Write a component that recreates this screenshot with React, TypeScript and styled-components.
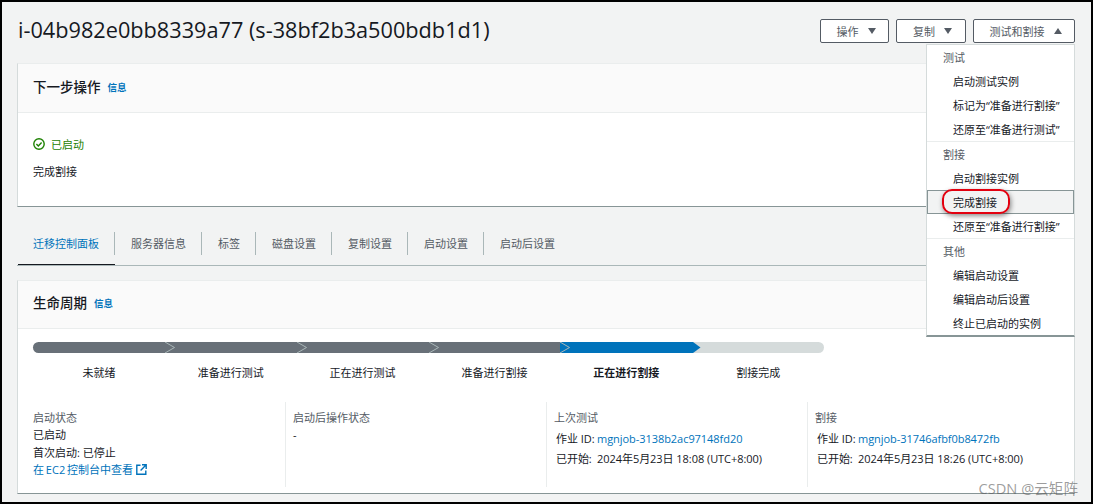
import styled, { createGlobalStyle } from 'styled-components';

const GlobalStyle = createGlobalStyle`
  html, body {
    margin: 0;
    padding: 0;
  }
  body {
    font-family: 'Open Sans', 'Noto Sans CJK SC', sans-serif;
    font-size: 11px;
    color: #16191f;
  }
`;

const Frame = styled.div`
  position: relative;
  box-sizing: border-box;
  width: 1093px;
  height: 504px;
  overflow: hidden;
  padding: 17px 16px 0 15px;
  border: 2px solid #000;
  background: #f2f3f3;
`;

const PageHeader = styled.header`
  display: flex;
  align-items: center;
  justify-content: space-between;
  height: 24px;
  margin-bottom: 20px;
`;

const Title = styled.h1`
  margin: -2px 0 0 1px;
  font-size: 21.7px;
  font-weight: 400;
  line-height: 26px;
  white-space: nowrap;
`;

const Actions = styled.div`
  display: flex;
  gap: 7px;
`;

const ActionButton = styled.button<{ $width: number }>`
  display: flex;
  align-items: center;
  justify-content: center;
  gap: 9px;
  box-sizing: border-box;
  width: ${(p) => p.$width}px;
  height: 24px;
  padding: 0 0 0 3px;
  border: 1px solid #545b64;
  border-radius: 2px;
  background: #fff;
  color: #545b64;
  font: inherit;
  font-size: 11px;
`;

const Caret = styled.svg<{ $up?: boolean }>`
  width: 8px;
  height: 6px;
  fill: #545b64;
  transform: ${(p) => (p.$up ? 'rotate(180deg)' : 'none')};
`;

const Card = styled.section<{ $height: number }>`
  box-sizing: border-box;
  height: ${(p) => p.$height}px;
  border: 1px solid #eaeded;
  border-left-color: #d5dbdb;
  border-right-color: #d5dbdb;
  border-bottom-color: #879596;
  background: #fff;
`;

const CardHeader = styled.div<{ $height: number; $lift: number }>`
  display: flex;
  align-items: center;
  gap: 7px;
  box-sizing: border-box;
  height: ${(p) => p.$height}px;
  padding: 0 15px ${(p) => p.$lift}px;
  border-bottom: 1px solid #eaeded;
  background: #fafafa;
`;

const CardTitle = styled.h2`
  margin: 0;
  font-size: 13.5px;
  font-weight: 500;
`;

const InfoLink = styled.a`
  margin-top: 2px;
  color: #0073bb;
  font-size: 9.5px;
  font-weight: 700;
`;

const NextStepBody = styled.div`
  padding: 23px 15px 0;
`;

const StatusLine = styled.div`
  display: flex;
  align-items: center;
  gap: 6px;
  height: 16px;
  margin-bottom: 12px;
  color: #1d8102;
`;

const BodyText = styled.div`
  line-height: 16px;
`;

const Tabs = styled.nav`
  display: flex;
  align-items: flex-start;
  height: 33px;
  margin: 25px 0 14px;
  border-bottom: 1px solid #aab7b8;
`;

const Tab = styled.div<{ $active?: boolean }>`
  position: relative;
  box-sizing: border-box;
  height: 23px;
  padding: 0 15px 0 16px;
  border-right: 1px solid #aab7b8;
  color: ${(p) => (p.$active ? '#0073bb' : '#545b64')};
  line-height: 23px;

  &:last-child {
    border-right: 0;
  }

  &::after {
    content: '';
    display: ${(p) => (p.$active ? 'block' : 'none')};
    position: absolute;
    left: 1px;
    right: -1px;
    top: 32px;
    height: 1px;
    background: #16191f;
  }
`;

const LifecycleBody = styled.div`
  padding: 13px 0 0;
`;

const Progress = styled.div`
  display: grid;
  grid-template-columns: repeat(6, 131.85px);
  padding-left: 15px;
`;

const Segment = styled.div<{ $tone: 'done' | 'current' | 'todo'; $first?: boolean; $last?: boolean }>`
  position: relative;
  height: 11px;
  border-radius: ${(p) => (p.$first ? '6px 0 0 6px' : p.$last ? '0 6px 6px 0' : '0')};
  background: ${(p) => (p.$tone === 'done' ? '#687078' : p.$tone === 'current' ? '#0073bb' : '#d5dbdb')};
`;

const Chevron = styled.svg`
  position: absolute;
  z-index: 1;
  top: 0;
  left: 100%;
  width: 10px;
  height: 11px;
`;

const StepLabel = styled.div<{ $current?: boolean }>`
  margin-top: 12px;
  font-weight: ${(p) => (p.$current ? 600 : 400)};
  line-height: 16px;
  text-align: center;
`;

const Details = styled.div`
  display: grid;
  grid-template-columns: 267px 261px 261px 1fr;
  height: 85px;
  margin-top: 21px;
`;

const DetailColumn = styled.div`
  box-sizing: border-box;
  padding: 7px 7px 0;
  border-left: 1px solid #eaeded;

  &:first-child {
    padding-left: 15px;
    border-left: 0;
  }
`;

const DetailLabel = styled.div`
  color: #545b64;
  line-height: 17px;
`;

const DetailLine = styled.div`
  display: flex;
  align-items: center;
  line-height: 17.5px;
  white-space: nowrap;
`;

const JobLine = styled.div`
  display: flex;
  align-items: center;
  margin: 4px 0 0 2px;
  letter-spacing: -0.05px;
  line-height: 17px;
  white-space: nowrap;

  & + & {
    margin-top: 3px;
  }
`;

const JobKey = styled.span`
  flex: none;
  width: 41px;
`;

const Link = styled.a`
  display: inline-flex;
  align-items: center;
  gap: 3px;
  color: #0073bb;
  word-spacing: -1px;
`;

const Menu = styled.div`
  position: absolute;
  z-index: 3;
  top: 42px;
  right: 16px;
  box-sizing: border-box;
  width: 149px;
  height: 293px;
  border: 1px solid #d5dbdb;
  border-bottom: 2px solid #879596;
  background: #fff;
`;

const MenuGroup = styled.div`
  border-bottom: 1px solid #eaeded;

  &:last-child {
    border-bottom: 0;
  }
`;

const MenuHeading = styled.div`
  height: 24px;
  padding-left: 16px;
  color: #545b64;
  line-height: 25px;
`;

const MenuItem = styled.div<{ $selected?: boolean }>`
  position: relative;
  box-sizing: border-box;
  height: 24px;
  padding-left: ${(p) => (p.$selected ? 25 : 26)}px;
  border: ${(p) => (p.$selected ? '1px solid #879596' : '0')};
  background: ${(p) => (p.$selected ? '#f2f3f3' : 'transparent')};
  line-height: ${(p) => (p.$selected ? 24 : 26)}px;
  white-space: nowrap;
`;

const Highlight = styled.span`
  position: absolute;
  top: -2px;
  left: 14px;
  width: 64px;
  height: 21px;
  border: 2px solid #e3000f;
  border-radius: 10px;
  box-shadow: 1px 2px 5px rgba(0, 0, 0, 0.45);
`;

const Watermark = styled.div`
  position: absolute;
  z-index: 4;
  right: 13px;
  bottom: 5px;
  color: rgba(90, 90, 90, 0.6);
  font-size: 14.6px;
  line-height: 18px;
  white-space: nowrap;
`;

const tabs = ['迁移控制面板', '服务器信息', '标签', '磁盘设置', '复制设置', '启动设置', '启动后设置'];

const steps: { label: string; tone: 'done' | 'current' | 'todo' }[] = [
  { label: '未就绪', tone: 'done' },
  { label: '准备进行测试', tone: 'done' },
  { label: '正在进行测试', tone: 'done' },
  { label: '准备进行割接', tone: 'done' },
  { label: '正在进行割接', tone: 'current' },
  { label: '割接完成', tone: 'todo' },
];

const menuGroups = [
  { heading: '测试', items: ['启动测试实例', '标记为“准备进行割接”', '还原至“准备进行测试”'] },
  { heading: '割接', items: ['启动割接实例', '完成割接', '还原至“准备进行割接”'] },
  { heading: '其他', items: ['编辑启动设置', '编辑启动后设置', '终止已启动的实例'] },
];

const jobs = [
  { title: '上次测试', id: 'mgnjob-3138b2ac97148fd20', started: '2024年5月23日 18:08 (UTC+8:00)' },
  { title: '割接', id: 'mgnjob-31746afbf0b8472fb', started: '2024年5月23日 18:26 (UTC+8:00)' },
];

function CaretIcon({ up }: { up?: boolean }) {
  return (
    <Caret $up={up} viewBox="0 0 8 6">
      <path d="M0 0h8L4 6z" />
    </Caret>
  );
}

function StatusIcon() {
  return (
    <svg width="12" height="12" viewBox="0 0 12 12" fill="none" stroke="#1d8102" strokeWidth="1.4">
      <circle cx="6" cy="6" r="5.2" />
      <path d="M3.4 6l1.9 1.9 3.3-3.5" />
    </svg>
  );
}

function ExternalIcon() {
  return (
    <svg width="11" height="11" viewBox="0 0 11 11" fill="none" stroke="#0073bb" strokeWidth="1.4">
      <path d="M4.5 1.2H.8v9h9V6.5" />
      <path d="M6 .8h4.2V5M10.2.8L4.6 6.4" />
    </svg>
  );
}

function SegmentTip({ tone }: { tone: 'done' | 'current' | 'todo' }) {
  if (tone === 'current') {
    return (
      <Chevron viewBox="0 0 10 11">
        <path d="M0 0h1l7.5 5.5L1 11H0z" fill="#0073bb" />
      </Chevron>
    );
  }
  return (
    <Chevron viewBox="0 0 10 11">
      <path d="M0 0l9.5 5.5L0 11" fill="none" stroke="#aab7b8" strokeWidth="1" />
    </Chevron>
  );
}

export function App() {
  return (
    <Frame>
      <GlobalStyle />
      <PageHeader>
        <Title>i-04b982e0bb8339a77 (s-38bf2b3a500bdb1d1)</Title>
        <Actions>
          <ActionButton $width={69}>
            操作 <CaretIcon />
          </ActionButton>
          <ActionButton $width={70}>
            复制 <CaretIcon />
          </ActionButton>
          <ActionButton $width={102}>
            测试和割接 <CaretIcon up />
          </ActionButton>
        </Actions>
      </PageHeader>

      <Card $height={144}>
        <CardHeader $height={49} $lift={4}>
          <CardTitle>下一步操作</CardTitle>
          <InfoLink>信息</InfoLink>
        </CardHeader>
        <NextStepBody>
          <StatusLine>
            <StatusIcon />
            已启动
          </StatusLine>
          <BodyText>完成割接</BodyText>
        </NextStepBody>
      </Card>

      <Tabs>
        {tabs.map((tab, i) => (
          <Tab key={tab} $active={i === 0}>
            {tab}
          </Tab>
        ))}
      </Tabs>

      <Card $height={214}>
        <CardHeader $height={48} $lift={6}>
          <CardTitle>生命周期</CardTitle>
          <InfoLink>信息</InfoLink>
        </CardHeader>
        <LifecycleBody>
          <Progress>
            {steps.map((step, i) => (
              <Segment key={step.label} $tone={step.tone} $first={i === 0} $last={i === steps.length - 1}>
                {i < steps.length - 1 && <SegmentTip tone={step.tone} />}
              </Segment>
            ))}
            {steps.map((step) => (
              <StepLabel key={step.label} $current={step.tone === 'current'}>
                {step.label}
              </StepLabel>
            ))}
          </Progress>
          <Details>
            <DetailColumn>
              <DetailLabel>启动状态</DetailLabel>
              <DetailLine>已启动</DetailLine>
              <DetailLine>首次启动: 已停止</DetailLine>
              <DetailLine>
                <Link>
                  在 EC2 控制台中查看 <ExternalIcon />
                </Link>
              </DetailLine>
            </DetailColumn>
            <DetailColumn>
              <DetailLabel>启动后操作状态</DetailLabel>
              <DetailLine>-</DetailLine>
            </DetailColumn>
            {jobs.map((job) => (
              <DetailColumn key={job.title}>
                <DetailLabel>{job.title}</DetailLabel>
                <JobLine>
                  <JobKey>作业 ID:</JobKey>
                  <Link>{job.id}</Link>
                </JobLine>
                <JobLine>
                  <JobKey>已开始:</JobKey>
                  {job.started}
                </JobLine>
              </DetailColumn>
            ))}
          </Details>
        </LifecycleBody>
      </Card>

      <Menu>
        {menuGroups.map((group) => (
          <MenuGroup key={group.heading}>
            <MenuHeading>{group.heading}</MenuHeading>
            {group.items.map((item) => (
              <MenuItem key={item} $selected={item === '完成割接'}>
                {item}
                {item === '完成割接' && <Highlight />}
              </MenuItem>
            ))}
          </MenuGroup>
        ))}
      </Menu>

      <Watermark>CSDN @云矩阵</Watermark>
    </Frame>
  );
}

export default App;
